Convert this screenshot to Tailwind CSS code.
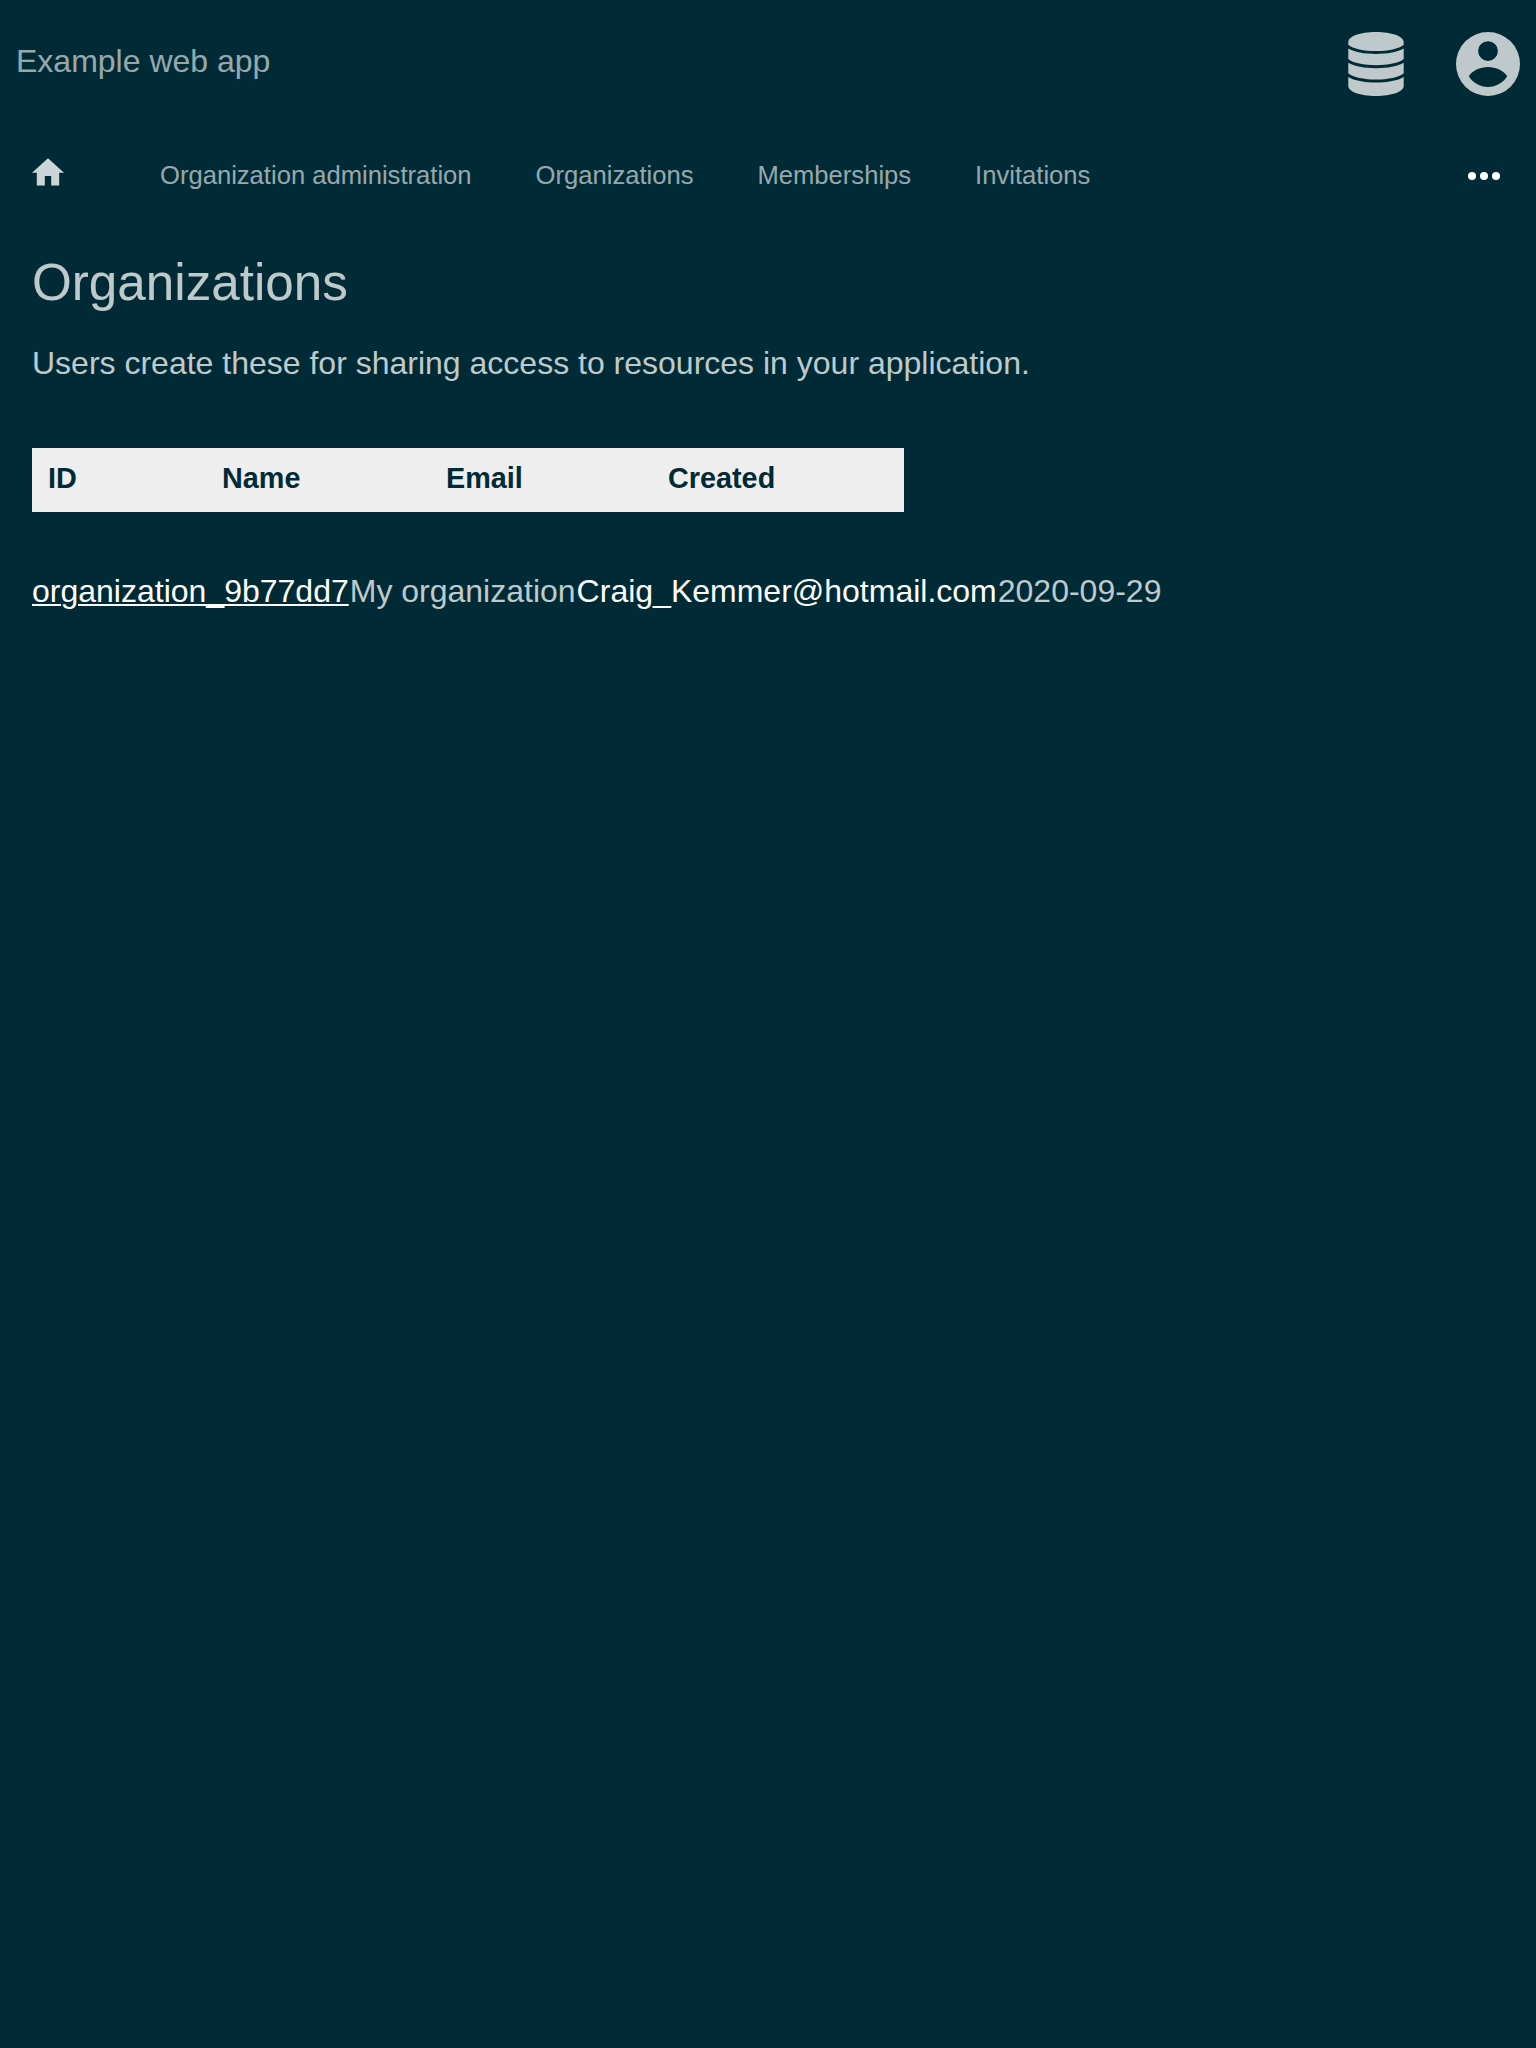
<!DOCTYPE html>
<html lang="en">
<head>
<meta charset="utf-8">
<title>Organizations</title>
<script src="https://cdn.jsdelivr.net/npm/@tailwindcss/browser@4"></script>
</head>
<body class="min-h-screen bg-[#002b36] font-['Liberation_Sans',sans-serif] text-[32px] leading-[48px] text-white/75">
<header class="flex h-32 items-start justify-between px-4 pt-8">
  <div class="pt-[5px] text-white/60 leading-[48px]">Example web app</div>
  <div class="flex gap-[52px]">
    <svg class="h-16 w-14 fill-white/75" viewBox="0 0 56 64"><path d="M28 0C43.500 0 55.700 4.300 55.700 10V12.700C51 16.800 40 19 28 19S5 16.800 0.300 12.700V10C0.300 4.300 12.500 0 28 0zM0.300 16.600C6 20.200 16.500 22 28 22S50 20.200 55.700 16.600V27C51 31 40 33.200 28 33.200S5 31 0.300 27zM0.300 30.800C6 34.400 16.500 36.200 28 36.200S50 34.400 55.700 30.800V41.200C51 45.200 40 47.500 28 47.500S5 45.200 0.300 41.200zM0.300 45C6 48.600 16.500 50.500 28 50.500S50 48.600 55.700 45V54C55.700 59.700 43.500 64 28 64S0.300 59.700 0.300 54z"/></svg>
    <svg class="size-16 fill-white/75" viewBox="0 0 64 64" fill-rule="evenodd"><path d="M32 0a32 32 0 1 0 0 64a32 32 0 1 0 0-64zM32 9.200a9.900 9.900 0 1 1 0 19.800a9.900 9.900 0 1 1 0-19.800zM32 55C24 55 17 51 12.800 44.300C16 38.500 24 34.900 32 34.900S48 38.500 51.200 44.300C47 51 40 55 32 55z"/></svg>
  </div>
</header>
<nav class="flex h-24 items-center px-8 text-[25.6px] text-white/60">
  <svg class="-mt-1 mr-24 size-8 fill-white/80" viewBox="2 2.800 20 20"><path d="M10 20v-6h4v6h5v-8h3L12 3 2 12h3v8z"/></svg>
  <div class="-mt-0.5 flex gap-16"><a>Organization administration</a><a>Organizations</a><a>Memberships</a><a>Invitations</a></div>
  <svg class="ml-auto mr-1 h-2 w-8 fill-white" viewBox="0 0 32 8"><circle cx="4" cy="4" r="4"/><circle cx="16" cy="4" r="4"/><circle cx="28" cy="4" r="4"/></svg>
</nav>
<main class="px-8 pt-[27px]">
  <h1 class="text-[51.2px] leading-[64px]">Organizations</h1>
  <p class="mt-6">Users create these for sharing access to resources in your application.</p>
  <div class="mt-[61px] grid h-16 w-[872px] grid-cols-[174px_224px_222px_1fr] bg-[#eee] pt-1.5 text-[28.8px] font-bold text-[#002b36]">
    <div class="pl-4">ID</div><div class="pl-4">Name</div><div class="pl-4">Email</div><div class="pl-4">Created</div>
  </div>
  <div class="mt-[55px] flex gap-px whitespace-nowrap">
    <a class="text-white underline decoration-2 underline-offset-2">organization_9b77dd7</a><span>My organization</span><span class="text-white">Craig_Kemmer@hotmail.com</span><span>2020-09-29</span>
  </div>
</main>
</body>
</html>
